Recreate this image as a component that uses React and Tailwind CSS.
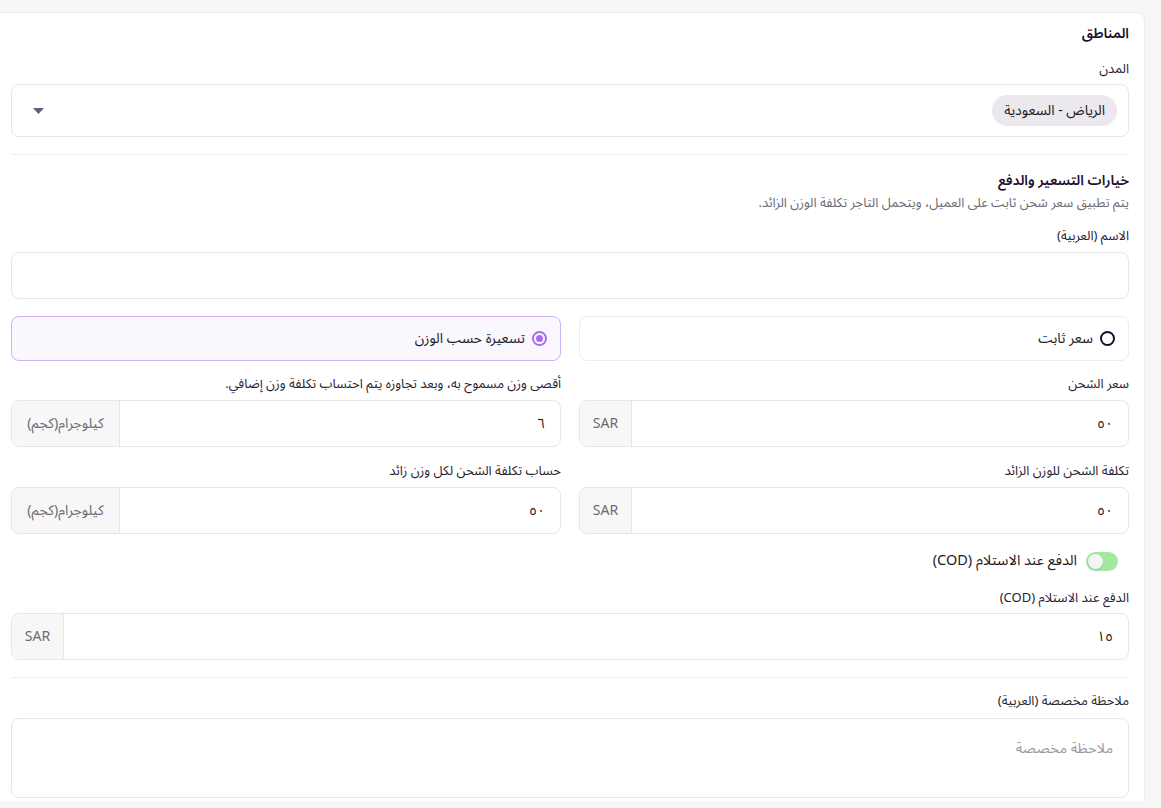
import React from "react";

const font = { fontFamily: '"Noto Sans Arabic", "Noto Sans", "DejaVu Sans", sans-serif' };

const Label = ({ children, className = "" }) => (
  <div className={`text-[13px] leading-[18px] text-[#2a2230] ${className}`}>{children}</div>
);

const AddonInput = ({ value, addon, addonWidth }) => (
  <div className="flex h-[47px] rounded-lg border border-[#e6e6e6] overflow-hidden bg-white">
    <div className="flex-1 flex items-center pr-[15px] text-[14px] text-[#1f1a24]">{value}</div>
    <div className={`${addonWidth} flex items-center justify-center bg-[#f7f7f7] border-r border-[#e6e6e6] text-[14px] text-[#6b6b73]`}>
      {addon}
    </div>
  </div>
);

export default function App() {
  return (
    <div dir="rtl" style={font} className="h-[808px] overflow-hidden bg-[#f7f7f7] pt-3 pr-4">
      <div className="bg-white rounded-tr-lg border-t border-r border-[#ececec] pt-[11px] pr-[15px] pl-[11px] pb-[3px]">
        {/* Regions */}
        <div className="text-[14px] leading-5 font-semibold text-[#1e0f2c]">المناطق</div>
        <Label className="mt-4">المدن</Label>
        <div className="mt-[6px] h-[53px] rounded-lg border border-[#e6e6e6] flex items-center justify-between pr-[11px] pl-[21px]">
          <span className="h-[31px] px-[12px] rounded-full bg-[#ebe8ee] flex items-center text-[14px] text-[#1f1a24]">
            الرياض - السعودية
          </span>
          <svg width="11" height="6" viewBox="0 0 11 6">
            <path d="M0 0 L11 0 L5.5 6 Z" fill="#6a5a7d" />
          </svg>
        </div>

        <div className="mt-[17px] border-t border-[#efefef]" />

        {/* Pricing */}
        <div className="mt-[16px] text-[14px] leading-5 font-semibold text-[#1e0f2c]">خيارات التسعير والدفع</div>
        <div className="mt-[3px] text-[13px] leading-[18px] text-[#6b6b73]">
          يتم تطبيق سعر شحن ثابت على العميل، ويتحمل التاجر تكلفة الوزن الزائد.
        </div>
        <Label className="mt-[15px]">الاسم (العربية)</Label>
        <div className="mt-[7px] h-[47px] rounded-lg border border-[#e6e6e6]" />

        <div className="mt-[17px] grid grid-cols-2 gap-[18px]">
          <div className="h-[45px] rounded-lg border border-[#ececec] flex items-center gap-[7px] pr-[13px]">
            <span className="w-[15px] h-[15px] rounded-full border-2 border-[#1f0a33]" />
            <span className="text-[14px] text-[#1f1a24]">سعر ثابت</span>
          </div>
          <div className="h-[45px] rounded-lg border border-[#cdb2f7] bg-[#faf7ff] flex items-center gap-[7px] pr-[13px]">
            <span className="w-[15px] h-[15px] rounded-full border-2 border-[#a66cf6] flex items-center justify-center">
              <span className="w-[7px] h-[7px] rounded-full bg-[#a66cf6]" />
            </span>
            <span className="text-[14px] text-[#1f1a24]">تسعيرة حسب الوزن</span>
          </div>
        </div>

        <div className="mt-[14px] grid grid-cols-2 gap-x-[18px]">
          <div>
            <Label>سعر الشحن</Label>
            <div className="mt-[7px]">
              <AddonInput value="٥٠" addon="SAR" addonWidth="w-[52px]" />
            </div>
          </div>
          <div>
            <Label>أقصى وزن مسموح به، وبعد تجاوزه يتم احتساب تكلفة وزن إضافي.</Label>
            <div className="mt-[7px]">
              <AddonInput value="٦" addon="كيلوجرام(كجم)" addonWidth="w-[108px]" />
            </div>
          </div>
          <div className="mt-[15px]">
            <Label>تكلفة الشحن للوزن الزائد</Label>
            <div className="mt-[7px]">
              <AddonInput value="٥٠" addon="SAR" addonWidth="w-[52px]" />
            </div>
          </div>
          <div className="mt-[15px]">
            <Label>حساب تكلفة الشحن لكل وزن زائد</Label>
            <div className="mt-[7px]">
              <AddonInput value="٥٠" addon="كيلوجرام(كجم)" addonWidth="w-[108px]" />
            </div>
          </div>
        </div>

        <div className="mt-[17px] h-5 flex items-center gap-[9px] pr-[11px]">
          <span className="w-[32px] h-[19px] rounded-full bg-[#a3e89f] flex items-center justify-end px-[2px]">
            <span className="w-[15px] h-[15px] rounded-full bg-[#f4f4f4] shadow-sm" />
          </span>
          <span className="text-[14.5px] text-[#1f1a24]">الدفع عند الاستلام (COD)</span>
        </div>

        <Label className="mt-[18px]">الدفع عند الاستلام (COD)</Label>
        <div className="mt-[6px]">
          <AddonInput value="١٥" addon="SAR" addonWidth="w-[52px]" />
        </div>

        <div className="mt-[17px] border-t border-[#efefef]" />

        <Label className="mt-[14px]">ملاحظة مخصصة (العربية)</Label>
        <div className="mt-2 h-[80px] rounded-lg border border-[#e6e6e6] pr-[15px] pt-[19px] text-[14.5px] text-[#9a9aa2]">
          ملاحظة مخصصة
        </div>
      </div>
    </div>
  );
}
